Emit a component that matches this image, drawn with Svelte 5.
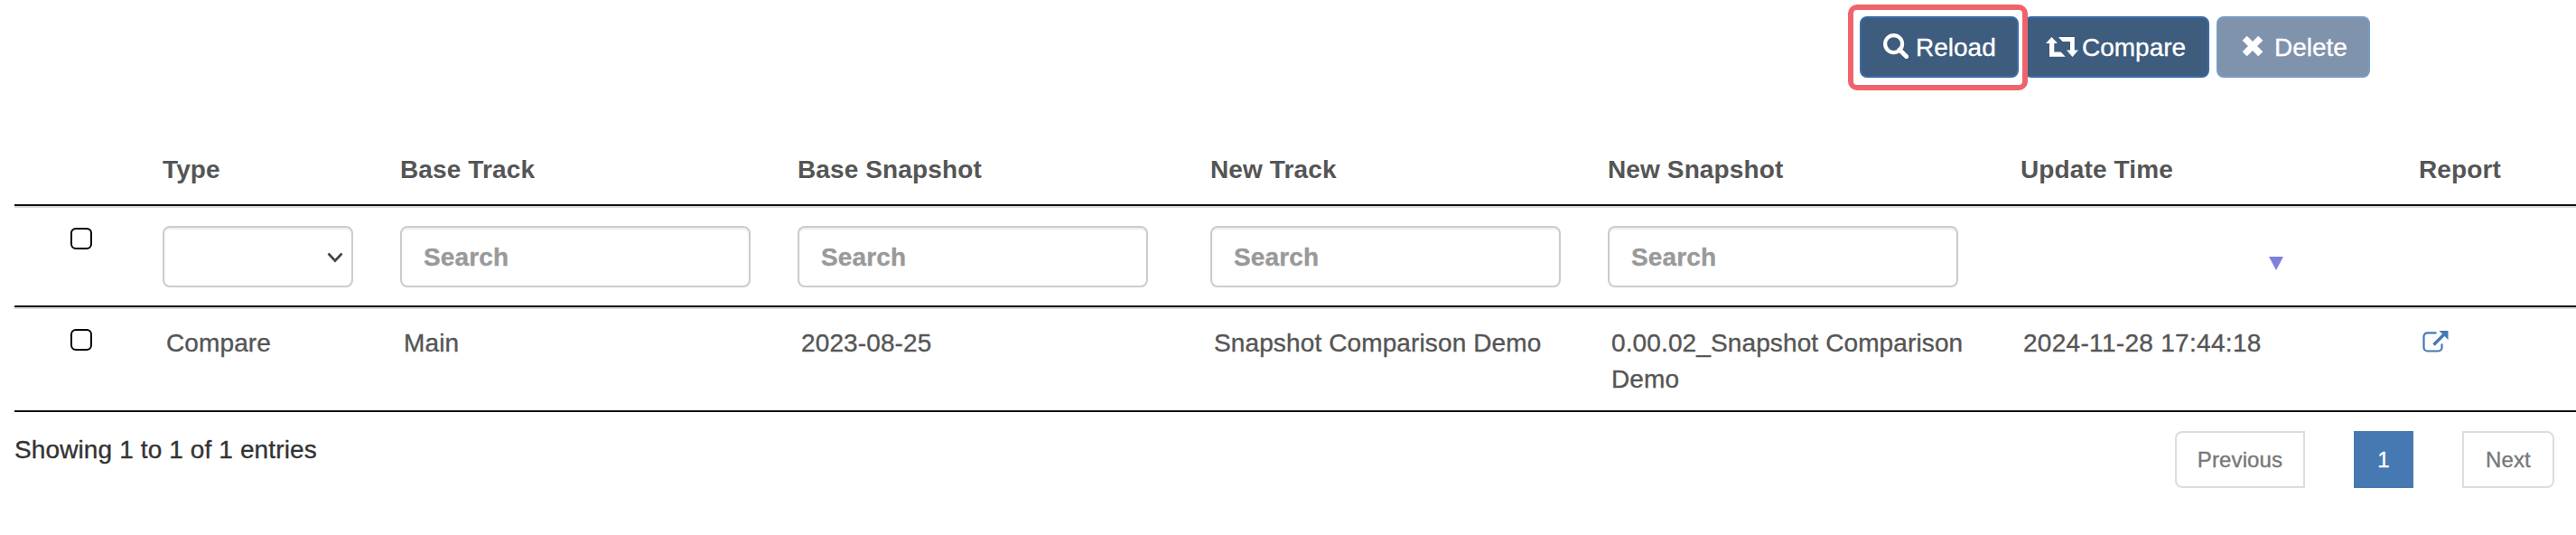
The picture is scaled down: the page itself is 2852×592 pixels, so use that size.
<script>
  const columns = [
    { title: 'Type', filter: 'select' },
    { title: 'Base Track', filter: 'text' },
    { title: 'Base Snapshot', filter: 'text' },
    { title: 'New Track', filter: 'text' },
    { title: 'New Snapshot', filter: 'text' },
    { title: 'Update Time', filter: 'sort' },
    { title: 'Report', filter: 'none' }
  ];
  const row = ['Compare', 'Main', '2023-08-25', 'Snapshot Comparison Demo', '0.00.02_Snapshot Comparison Demo', '2024-11-28 17:44:18'];
</script>

<div class="page">
  <div class="toolbar">
    <div class="highlight">
      <button class="btn reload">
        <svg width="28" height="28" viewBox="0 0 28 28"><circle cx="11.6" cy="11.6" r="9.5" fill="none" stroke="#fff" stroke-width="4.2" /><path d="M18 18l7.600 7.600" stroke="#fff" stroke-width="5" stroke-linecap="round" /></svg>
        <span>Reload</span>
      </button>
    </div>
    <button class="btn compare">
      <svg width="36" height="22" viewBox="0 0 36 22"><path fill="#fff" d="M6.5 0L13 7H9.3v9.6h7.4l5 5.1H4V7H0zM14 0h17.8v14.5H36L29.5 22L23 14.5h4V5H18.6z" /></svg>
      <span>Compare</span>
    </button>
    <button class="btn delete">
      <svg width="24" height="24" viewBox="0 0 24 24"><path d="M3.2 3.2l17.6 17.6M20.8 3.2L3.2 20.8" stroke="#fff" stroke-width="7.2" /></svg>
      <span>Delete</span>
    </button>
  </div>

  <div class="table">
    <div class="row head">
      <div></div>
      {#each columns as col}
        <div><span class="title">{col.title}</span></div>
      {/each}
    </div>
    <div class="row filters">
      <div class="check"><i class="box"></i></div>
      {#each columns as col}
        <div class="cell">
          {#if col.filter === 'select'}
            <div class="field select">
              <svg width="18" height="12" viewBox="0 0 18 12"><path d="M1.5 1.5L9 9.5l7.500-8" fill="none" stroke="#444" stroke-width="2.6" /></svg>
            </div>
          {:else if col.filter === 'text'}
            <div class="field"><span>Search</span></div>
          {:else if col.filter === 'sort'}
            <svg class="sort" width="16" height="15" viewBox="0 0 16 15"><path d="M0 0h16L8 15z" fill="#7f7fdf" /></svg>
          {/if}
        </div>
      {/each}
    </div>
    <div class="row data">
      <div class="check"><i class="box"></i></div>
      {#each row as value, i}
        <div class="value" class:time={i === 5}><span>{value}</span></div>
      {/each}
      <div class="value link">
        <svg width="30" height="26" viewBox="0 0 30 26"><path d="M15.500 3.300H5.500a4 4 0 0 0-4 4V19.500a4 4 0 0 0 4 4H17.500a4 4 0 0 0 4-4V15.500" fill="none" stroke="#4579b2" stroke-width="2.200" /><path d="M12.500 16.500L24 5" stroke="#4579b2" stroke-width="3.400" /><path d="M18.500 1H28.500V11z" fill="#4579b2" /></svg>
      </div>
    </div>
  </div>

  <div class="footer">
    <span class="info">Showing 1 to 1 of 1 entries</span>
    <div class="pager">
      <span class="page-btn prev">Previous</span>
      <span class="page-btn current">1</span>
      <span class="page-btn next">Next</span>
    </div>
  </div>
</div>

<style>
  :global(body) { background: #fff; overflow: hidden; }
  .page {
    width: 2852px;
    height: 592px;
    overflow: hidden;
    box-sizing: border-box;
    background: #fff;
    font-family: "Liberation Sans", Arial, sans-serif;
    font-size: 28px;
    line-height: 40px;
    letter-spacing: 0.12px;
    color: #555;
    -webkit-text-stroke: 0.35px currentColor;
  }
  .page :global(*) { box-sizing: border-box; }
  svg { display: block; flex: none; }
  span { white-space: nowrap; }
  .toolbar {
    display: flex;
    align-items: flex-start;
    height: 149px;
    padding: 5px 0 0 2046px;
  }
  .highlight {
    position: relative;
    z-index: 1;
    width: 199px;
    height: 95px;
    padding: 7px;
    border: 6px solid #ee646c;
    border-radius: 10px;
    background: #fff;
  }
  .btn {
    display: flex;
    align-items: center;
    height: 68px;
    padding: 0;
    border: 2px solid #3b6ca6;
    border-radius: 8px;
    background: #3d5c7e;
    color: #fff;
    font: 28px/40px "Liberation Sans", Arial, sans-serif;
  }
  .btn span { padding-top: 2px; }
  .reload { width: 176px; padding-left: 24px; gap: 8px; }
  .compare { width: 205px; margin: 13px 0 0 -4px; padding-left: 22px; gap: 4px; }
  .delete { width: 170px; margin: 13px 0 0 8px; padding-left: 26px; gap: 12px; background: #7f93ac; border-color: #7a9bc3; }
  .reload svg { margin-top: -2px; }
  .delete svg { margin-top: -3px; }

  .table { margin-left: 16px; }
  .row {
    display: grid;
    grid-template-columns: 164px 263px 440px 457px 440px 457px 441px 1fr;
    border-bottom: 2px solid #111;
  }
  .head { height: 79px; padding-top: 19px; font-weight: bold; -webkit-text-stroke-width: 0; }
  .filters { height: 112px; border-top: 2px solid #ddd; }
  .check { padding: 22px 0 0 62px; }
  .box {
    display: block;
    width: 24px;
    height: 24px;
    border: 2px solid #000;
    border-radius: 6px;
    background: #fff;
  }
  .cell { padding-top: 20px; }
  .field {
    display: flex;
    align-items: center;
    width: 388px;
    height: 68px;
    padding: 2px 0 0 24px;
    border: 2px solid #ccc;
    border-radius: 8px;
    box-shadow: inset 0 2px 2px rgba(0, 0, 0, 0.075);
    color: #999;
    font-weight: bold;
  }
  .select { width: 211px; justify-content: flex-end; padding: 2px 9px 0 0; }
  .sort { margin: 34px 0 0 275px; }
  .data { height: 116px; border-top: 2px solid #ddd; }
  .value { padding: 18px 20px 0 4px; }
  .value span { white-space: normal; }
  .time { padding-left: 3px; letter-spacing: 0.3px; }
  .link { padding-top: 23px; padding-left: 4px; }

  .footer { display: flex; justify-content: space-between; padding: 21px 24px 0 16px; }
  .info { padding-top: 1px; color: #333; }
  .pager { display: flex; }
  .page-btn {
    height: 63px;
    border: 2px solid #ddd;
    color: #777;
    font-size: 24px;
    line-height: 60px;
    text-align: center;
  }
  .prev { width: 144px; border-radius: 8px 0 0 8px; }
  .current { width: 66px; margin: 0 54px; background: #4679b2; border-color: #4679b2; color: #fff; }
  .next { width: 102px; border-radius: 0 8px 8px 0; }
</style>
